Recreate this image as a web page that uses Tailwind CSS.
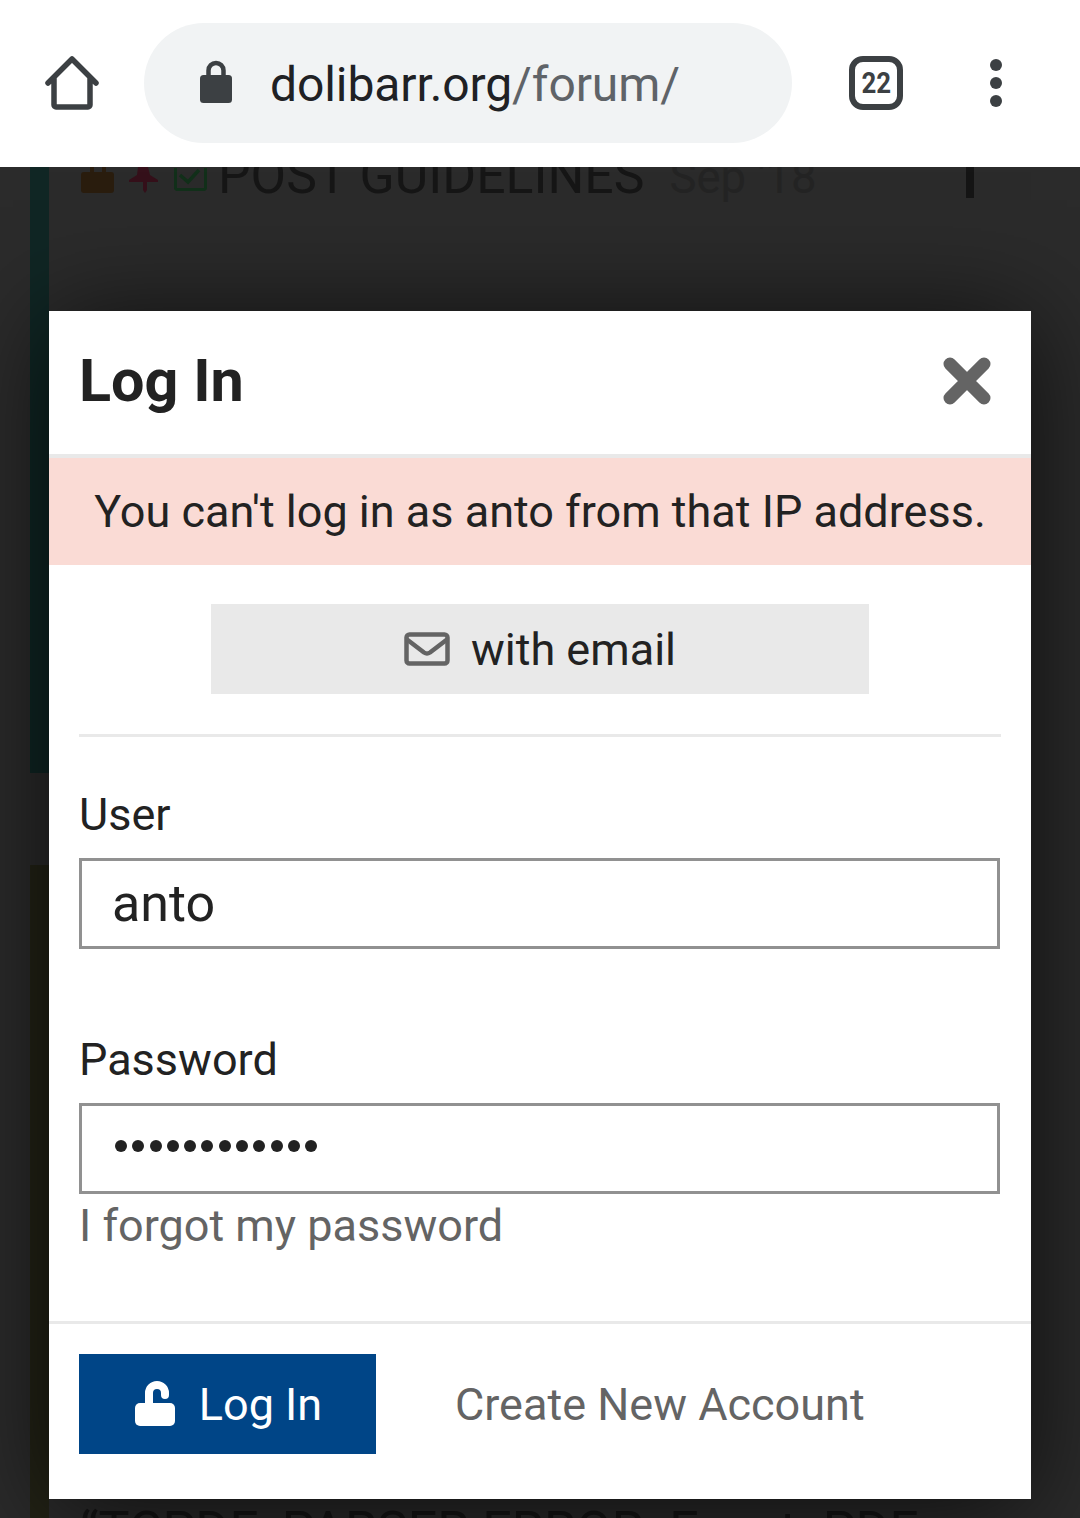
<!DOCTYPE html>
<html><head><meta charset="utf-8"><script src="https://cdn.jsdelivr.net/npm/@tailwindcss/browser@4"></script></head>
<body class="m-0">
<div class="relative w-[1080px] h-[1518px] overflow-hidden bg-[#2b2b2b] font-['Roboto',sans-serif]">
  <header class="relative z-20 h-[167px] bg-white flex items-center">
    <svg class="absolute left-[43px] top-[54px] w-[58px] h-[58px]" viewBox="0 0 58 58" fill="none" stroke="#3c4043" stroke-width="5.5" stroke-linejoin="round" stroke-linecap="round"><path d="M5 29 29 5l24 24M11 24v27a2 2 0 0 0 2 2h32a2 2 0 0 0 2-2V24"/></svg>
    <div class="absolute left-[144px] top-[23px] w-[648px] h-[120px] rounded-[60px] bg-[#f1f3f4]"></div>
    <svg class="absolute left-[198px] top-[60px] w-[36px] h-[46px]" viewBox="0 0 36 46"><path fill="none" stroke="#3c4043" stroke-width="4.5" d="M10.5 18v-7.5a7.5 7.5 0 0 1 15 0V18"/><rect x="2" y="15" width="32" height="28" rx="3.5" fill="#3c4043"/></svg>
    <div class="absolute left-[270px] top-[56px] text-[48px] leading-[58px] tracking-[-0.1px] text-[#202124] whitespace-nowrap">dolibarr.org<span class="text-[#5f6368]">/forum/</span></div>
    <div class="absolute left-[849px] top-[56px] w-[54px] h-[54px] rounded-[14px] border-[6px] border-[#3c4043] flex items-center justify-center text-[#3c4043] text-[30px] font-bold leading-none"><span class="scale-x-[0.86]">22</span></div>
    <div class="absolute left-[990px] top-[59px] flex flex-col gap-[6px]">
      <span class="w-[12px] h-[12px] rounded-full bg-[#3c4043]"></span>
      <span class="w-[12px] h-[12px] rounded-full bg-[#3c4043]"></span>
      <span class="w-[12px] h-[12px] rounded-full bg-[#3c4043]"></span>
    </div>
  </header>

  <main class="absolute inset-0">
    <div class="absolute left-[30px] top-[167px] w-[19px] h-[606px] bg-[#102624]"></div>
    <div class="absolute left-[30px] top-[865px] w-[19px] h-[653px] bg-[#232316]"></div>
    <svg class="absolute left-[78px] top-[160px] w-[135px] h-[36px]" viewBox="0 0 135 36" fill="none">
      <path fill="#2a1d0e" d="M6 12h6V7h4v5h8V7h4v5h5a3 3 0 0 1 3 3v15a3 3 0 0 1-3 3H6a3 3 0 0 1-3-3V15a3 3 0 0 1 3-3z"/>
      <path fill="#35101a" d="M60 7h10l2 8 8 5v2H69v8l-2 3-2-3v-8H51v-2l8-5z"/>
      <path stroke="#12301a" stroke-width="3" d="M127.500 8v20a1.500 1.500 0 0 1-1.500 1.500H99a1.500 1.500 0 0 1-1.500-1.500V8"/>
      <path stroke="#12301a" stroke-width="3.5" d="m102 15 8 7 11-12"/>
    </svg>
    <div class="absolute left-[218px] top-[146px] h-[60px] flex items-baseline whitespace-nowrap">
      <span class="text-[51.7px] leading-[60px] text-[#161616]">POST GUIDELINES</span>
      <span class="ml-[25px] text-[45.5px] leading-[60px] text-[#242424]">Sep '18</span>
    </div>
    <div class="absolute left-[966px] top-[167px] w-[8px] h-[31px] bg-[#151515]"></div>
    <div class="absolute left-[80px] top-[1503px] text-[52px] leading-[55px] text-[#151515] whitespace-nowrap">“TCPDF_PARSER ERROR: Exact: PDF</div>
  </main>

  <section class="absolute z-10 left-[49px] top-[311px] w-[982px] h-[1188px] bg-white shadow-[0_10px_100px_rgba(0,0,0,0.7)] flex flex-col text-[#222222]">
    <div class="h-[147px] shrink-0 border-b-[4px] border-[#e9e9e9] pl-[30px] pr-[40px] flex items-center justify-between">
      <h1 class="text-[59.3px] font-bold leading-none -mt-[3px]">Log In</h1>
      <svg class="w-[48px] h-[48px] -mt-[3px]" viewBox="0 0 48 48"><path stroke="#646464" stroke-width="13" stroke-linecap="round" d="M7 7l34 34M41 7 7 41"/></svg>
    </div>
    <div class="h-[107px] shrink-0 bg-[#fadbd5] flex items-center justify-center pt-[1px] text-[45px]">You can't log in as anto from that IP address.</div>
    <div class="px-[30px]">
      <div class="mt-[39px] mx-[132px] h-[90px] bg-[#e9e9e9] flex items-center justify-center gap-[21px] text-[45px]">
        <svg class="w-[46px] h-[34px]" viewBox="0 0 46 34" fill="none" stroke="#646464" stroke-width="4.5" stroke-linejoin="round"><rect x="2.5" y="2.5" width="41" height="29" rx="3"/><path d="M3 7.5l17 13q3 2 6 0l17-13"/></svg>
        <span class="pt-[2px]">with email</span>
      </div>
      <div class="mt-[40px] h-[3px] bg-[#e9e9e9]"></div>
      <label class="block mt-[53px] text-[45px] leading-[50px]">User</label>
      <div class="mt-[18px] w-[921px] h-[91px] border-[3px] border-[#919191] flex items-center pl-[30px] text-[52px]">anto</div>
      <label class="block mt-[86px] text-[45px] leading-[50px]">Password</label>
      <div class="mt-[18px] w-[921px] h-[91px] border-[3px] border-[#919191] flex items-center gap-[5.3px] pl-[33px] pb-[6px]">
        <span class="w-[12px] h-[12px] rounded-full bg-[#222222]"></span><span class="w-[12px] h-[12px] rounded-full bg-[#222222]"></span><span class="w-[12px] h-[12px] rounded-full bg-[#222222]"></span><span class="w-[12px] h-[12px] rounded-full bg-[#222222]"></span><span class="w-[12px] h-[12px] rounded-full bg-[#222222]"></span><span class="w-[12px] h-[12px] rounded-full bg-[#222222]"></span><span class="w-[12px] h-[12px] rounded-full bg-[#222222]"></span><span class="w-[12px] h-[12px] rounded-full bg-[#222222]"></span><span class="w-[12px] h-[12px] rounded-full bg-[#222222]"></span><span class="w-[12px] h-[12px] rounded-full bg-[#222222]"></span><span class="w-[12px] h-[12px] rounded-full bg-[#222222]"></span><span class="w-[12px] h-[12px] rounded-full bg-[#222222]"></span>
      </div>
      <a class="block mt-[5px] text-[45px] leading-[54px] text-[#646464]">I forgot my password</a>
    </div>
    <div class="mt-[68px] border-t-[3px] border-[#e9e9e9] px-[30px] pt-[30px] flex items-center">
      <div class="w-[297px] h-[100px] bg-[#004587] flex items-center justify-center gap-[24px] pl-[2px] text-white text-[45px]">
        <svg class="w-[40px] h-[46px]" viewBox="0 0 40 46"><path fill="none" stroke="#fff" stroke-width="8" stroke-linecap="round" d="M14 24V12a8 8 0 0 1 16 0v2"/><rect x="0" y="22" width="40" height="23" rx="5" fill="#fff"/></svg>
        <span class="pt-[2px]">Log In</span>
      </div>
      <a class="ml-[79px] pt-[2px] text-[45px] text-[#646464]">Create New Account</a>
    </div>
  </section>
</div>
</body></html>
